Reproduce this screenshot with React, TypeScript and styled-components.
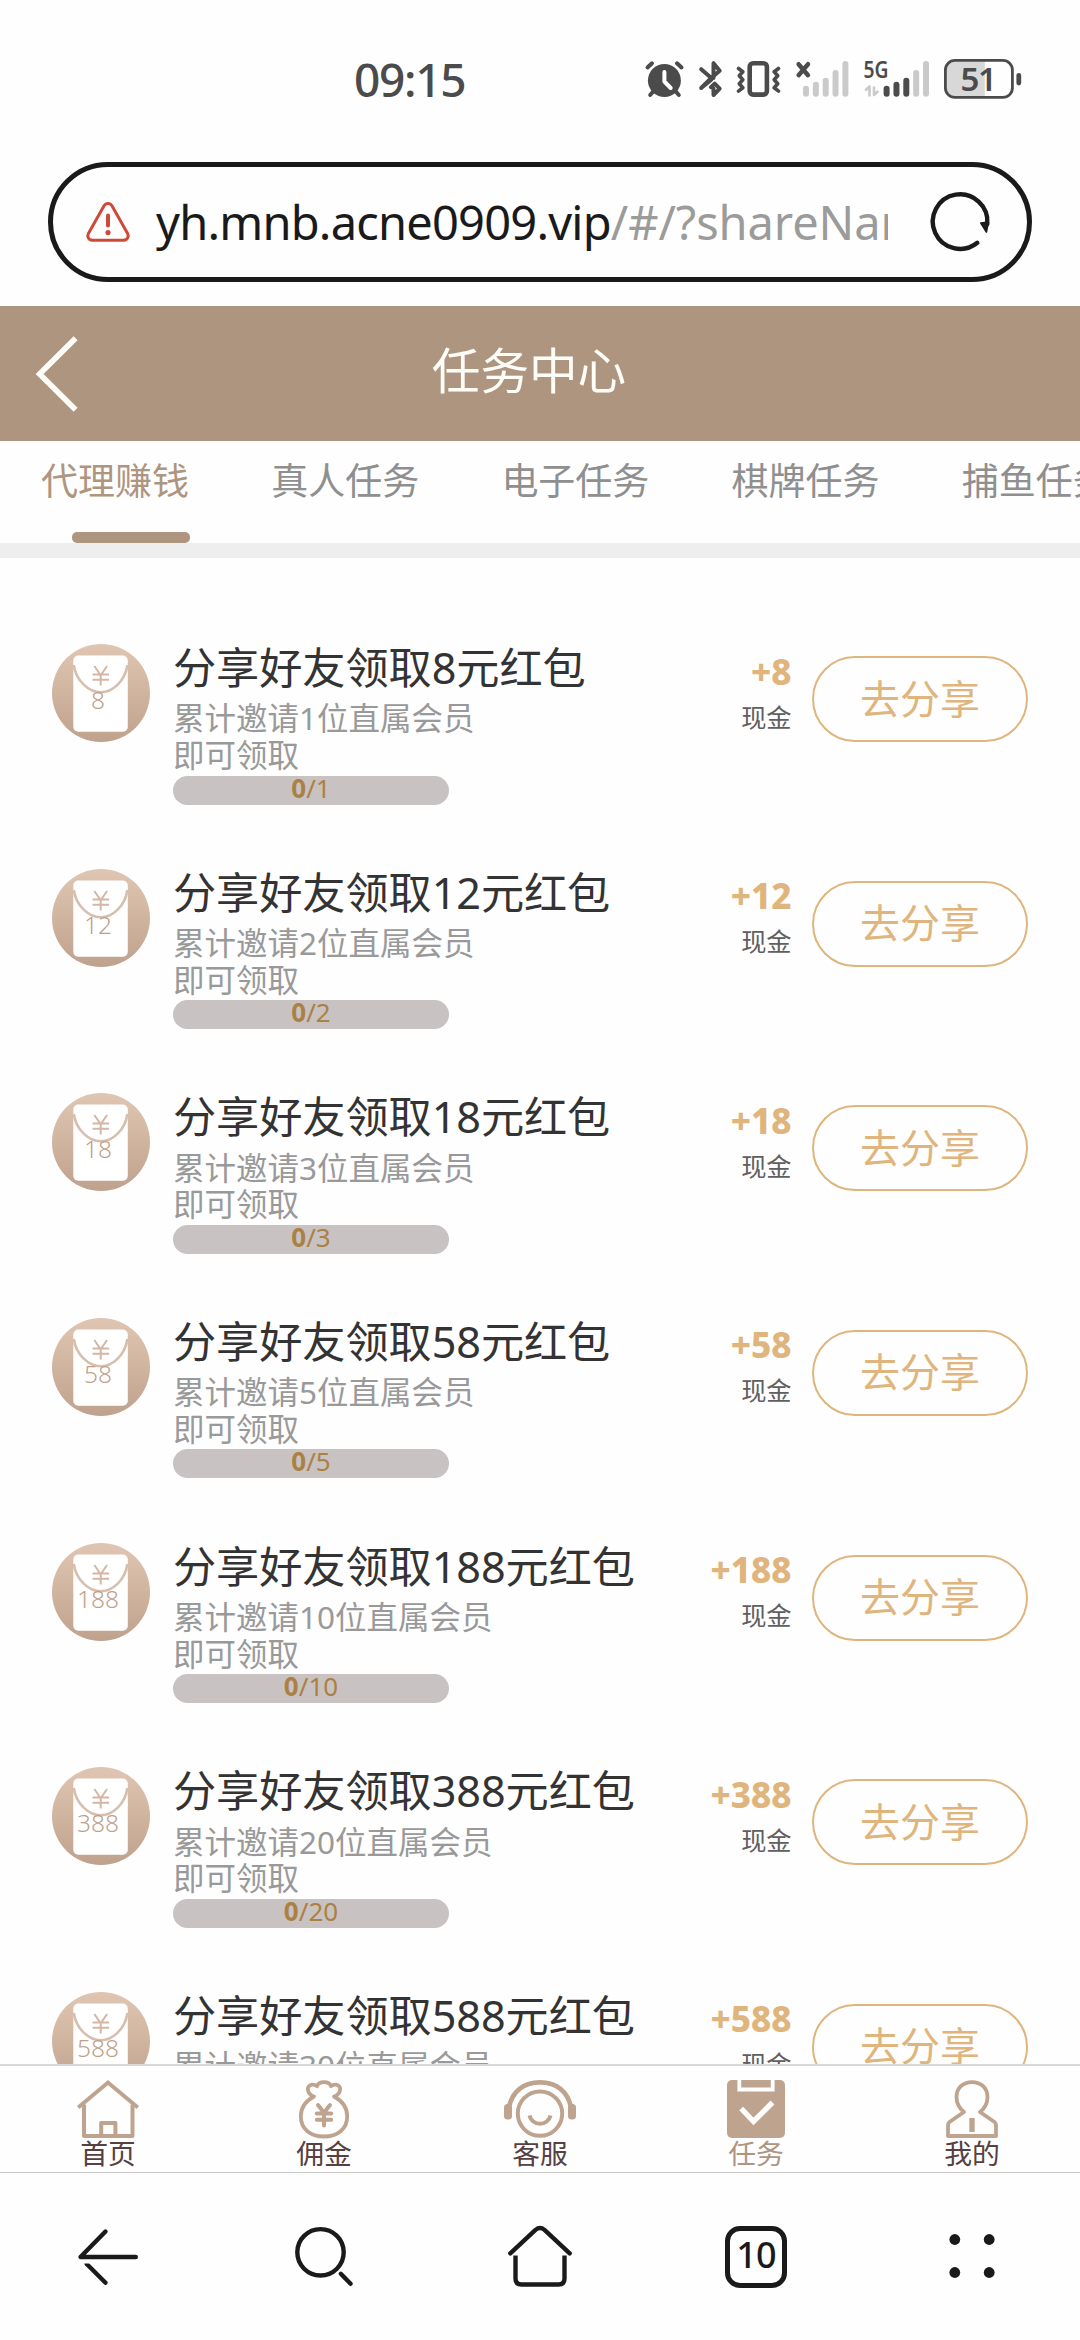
import React from "react";
import styled, { createGlobalStyle } from "styled-components";

const BRAND = "#ae9580";
const ICON = "#bea48f";
const GOLD = "#dfb57d";
const INK = "#1a1a1a";
const STATUS = "#4b4b4b";
const FONT = '"Noto Sans", "Noto Sans CJK SC", sans-serif';

const GlobalStyle = createGlobalStyle`
  * { box-sizing: border-box; }
  body { margin: 0; background: #fff; font-family: ${FONT}; }
  svg { display: block; flex: none; overflow: visible; }
  button { font-family: inherit; cursor: pointer; }
`;

const Screen = styled.div`
  width: 1080px;
  height: 2340px;
  display: flex;
  flex-direction: column;
  overflow: hidden;
  background: #fefefe;
`;

/* ---------- system status bar ---------- */

const StatusBar = styled.div`
  height: 162px;
  flex: none;
  display: flex;
  justify-content: space-between;
  padding: 59px 58px 0 354px;
`;

const Clock = styled.div`
  color: ${STATUS};
  font-size: 46px;
  font-weight: 500;
  line-height: 40px;
  letter-spacing: -1.3px;
`;

const StatusIcons = styled.div`
  display: flex;
  align-items: center;
  height: 40px;
  gap: 14.7px;
`;

/* ---------- browser address bar ---------- */

const AddressBar = styled.div`
  height: 120px;
  flex: none;
  margin: 0 48px 24px;
  padding: 0 36px 0 33px;
  display: flex;
  align-items: center;
  border: 5px solid ${INK};
  border-radius: 60px;
`;

const Url = styled.div`
  width: 732px;
  margin-left: 26px;
  margin-right: 43px;
  overflow: hidden;
  white-space: nowrap;
  font-size: 47px;
  line-height: 70px;
  letter-spacing: -0.1px;
  color: #9b9b9b;
`;

const Host = styled.span`
  color: ${INK};
  letter-spacing: -0.78px;
`;

/* ---------- page header and tabs ---------- */

const PageHeader = styled.header`
  height: 135px;
  flex: none;
  display: flex;
  align-items: center;
  padding: 0 100px 0 36px;
  background: ${BRAND};
`;

const PageTitle = styled.h1`
  flex: 1;
  margin: 0;
  text-align: center;
  font-size: 48.6px;
  font-weight: 400;
  line-height: 60px;
  padding-bottom: 7px;
  color: #fffdf8;
`;

const Tabs = styled.nav`
  height: 102px;
  flex: none;
  display: flex;
  gap: 82.2px;
  padding-left: 41px;
  overflow: hidden;
`;

const Tab = styled.div<{ $active?: boolean }>`
  flex: none;
  width: 148px;
  padding-top: 20px;
  display: flex;
  flex-direction: column;
  justify-content: space-between;
  white-space: nowrap;
  font-size: 37px;
  line-height: 40px;
  color: ${(p) => (p.$active ? BRAND : "#8f8f8f")};
`;

const TabUnderline = styled.div`
  width: 118px;
  height: 11px;
  margin-left: 31px;
  border-radius: 5px;
  background: ${BRAND};
`;

const Divider = styled.div`
  height: 15px;
  flex: none;
  background: #eee;
`;

/* ---------- task list ---------- */

const TaskList = styled.main`
  flex: 1;
  min-height: 0;
  overflow: hidden;
  padding: 86px 52px 0;
`;

const TaskRow = styled.article`
  height: 224.64px;
  display: grid;
  grid-template-columns: 98px 1fr auto 216px;
  align-items: start;
`;

const TaskBody = styled.div`
  padding-left: 23px;
  white-space: nowrap;
`;

const TaskTitle = styled.h2`
  margin: 0 0 9.4px;
  font-size: 43.2px;
  line-height: 47px;
  font-weight: 400;
  letter-spacing: -0.08px;
  color: #333;
`;

const TaskDesc = styled.p`
  margin: 0 0 1.8px;
  font-size: 31.5px;
  line-height: 36.7px;
  color: #999;
`;

const Progress = styled.div`
  width: 276px;
  height: 29px;
  border-radius: 14.5px;
  background: #c9c2c2;
  text-align: center;
  font-size: 26px;
  line-height: 25px;
  color: #ab8143;
`;

const Reward = styled.div`
  padding-top: 9.5px;
  margin-right: 20.5px;
  text-align: right;
`;

const Amount = styled.div`
  font-size: 35px;
  line-height: 36px;
  font-weight: 800;
  color: ${GOLD};
`;

const Unit = styled.div`
  margin-top: 12px;
  font-size: 25.2px;
  line-height: 30px;
  color: #5f5f5f;
`;

const ShareButton = styled.button`
  width: 216px;
  height: 86px;
  margin-top: 12px;
  padding: 0 0 1px;
  border: 2px solid ${GOLD};
  border-radius: 43px;
  background: transparent;
  color: ${GOLD};
  font-size: 40px;
  line-height: 50px;
`;

/* ---------- bottom bars ---------- */

const TabBar = styled.nav`
  height: 109px;
  flex: none;
  display: grid;
  grid-template-columns: repeat(5, 1fr);
  border-top: 2px solid #d8d8d8;
  border-bottom: 1px solid #c8c8c8;
`;

const TabBarItem = styled.div<{ $active?: boolean }>`
  display: flex;
  flex-direction: column;
  align-items: center;
  padding-top: 14px;
  font-size: 27.8px;
  line-height: 27px;
  color: ${(p) => (p.$active ? BRAND : "#564040")};
`;

const BrowserBar = styled.nav`
  height: 167px;
  flex: none;
  display: grid;
  grid-template-columns: repeat(5, 1fr);
  align-items: center;
  justify-items: center;
`;

const TabCount = styled.div`
  width: 62px;
  height: 62px;
  border: 5px solid ${INK};
  border-radius: 15px;
  text-align: center;
  font-size: 36px;
  line-height: 48px;
  letter-spacing: -0.8px;
  font-weight: 500;
  color: ${INK};
`;

/* ---------- icons ---------- */

const AlarmIcon = () => (
  <svg width="39" height="36" viewBox="0 0 39 36" fill="none" stroke={STATUS} strokeWidth="4" strokeLinecap="round">
    <circle cx="19.4" cy="19.5" r="16.5" fill={STATUS} stroke="none" />
    <path d="M2.5 6.5 7 2.3M36.5 6.5 32 2.3M9 29.5 5.2 34M30 29.5 33.8 34" />
    <path d="M19.4 11v9.5l6.3 6.5" stroke="#fff" strokeLinejoin="round" />
  </svg>
);

const BluetoothIcon = () => (
  <svg width="23" height="36" viewBox="0 0 23 36" fill="none" stroke={STATUS} strokeWidth="4" strokeLinecap="round" strokeLinejoin="round">
    <path d="M2.2 8.2 12.3 17 20.7 9.8 14.5 2.2V17M2.2 27 12.3 17M12.3 18.7 2.2 27M14.5 27.5V34l6.2-6.4-5-5-3.8 3.6" />
  </svg>
);

const VibrateIcon = () => (
  <svg width="45" height="36" viewBox="0 0 45 36" fill="none" stroke={STATUS} strokeLinecap="round" strokeLinejoin="round">
    <rect x="13.7" y="2.2" width="17.2" height="31.4" rx="3.5" strokeWidth="4.6" />
    <path d="m2.5 7.5 4.3 3.3-3.5 4 3.5 4-3.5 4 3.5 4-4.3 3.3M42.5 7.5l-4.3 3.3 3.5 4-3.5 4 3.5 4-3.5 4 4.3 3.3" strokeWidth="3.6" />
  </svg>
);

const BAR_TOPS = [24.7, 20.7, 16.7, 9, 0];

const SignalBars = ({ x, lit }: { x: number; lit: number }) => (
  <>
    {BAR_TOPS.map((top, i) => (
      <rect key={top} x={x + i * 9.85} y={top} width="6" height={35.8 - top} rx="3" fill={i < lit ? STATUS : "#cacaca"} />
    ))}
  </>
);

const NoSignalIcon = () => (
  <svg width="53" height="36" viewBox="0 0 53 36">
    <path d="m2.6 3.2 9.4 11M12 3.2l-9.4 11" stroke={STATUS} strokeWidth="4.4" strokeLinecap="round" />
    <SignalBars x={7} lit={0} />
  </svg>
);

const MobileIcon = () => (
  <svg width="65.5" height="36" viewBox="0 0 65.5 36">
    <text x="-0.5" y="17.2" fontFamily={FONT} fontSize="23.5" fontWeight="600" fill={STATUS} textLength="25" lengthAdjust="spacingAndGlyphs">5G</text>
    <path d="M1.2 29.5 5.5 25.5V35.5M10 25.5V34l4.3-4" stroke="#cacaca" strokeWidth="2.6" fill="none" strokeLinejoin="round" />
    <SignalBars x={19.6} lit={3} />
  </svg>
);

const BatteryIcon = () => (
  <svg width="78" height="40" viewBox="0 0 78 40">
    <path d="M11 1.5H40.8V38.5H11A9.5 9.5 0 0 1 1.5 29V11A9.5 9.5 0 0 1 11 1.5Z" fill="#d8d8d8" />
    <rect x="1.4" y="1.4" width="67" height="37" rx="9.5" fill="none" stroke={STATUS} strokeWidth="2.8" />
    <rect x="72.4" y="14" width="4.8" height="12.4" rx="2.4" fill={STATUS} />
    <text x="34" y="32" textAnchor="middle" fontFamily={FONT} fontSize="33" fontWeight="600" letterSpacing="-1.4" fill={STATUS}>51</text>
  </svg>
);

const WarningIcon = () => (
  <svg width="44" height="40" viewBox="0 0 44 40" fill="none" stroke="#cd4a38" strokeWidth="3">
    <path d="M18.2 3.6a4.4 4.4 0 0 1 7.6 0L41.6 31.6a4.4 4.4 0 0 1-3.8 6.6H6.2a4.4 4.4 0 0 1-3.8-6.6Z" strokeLinejoin="round" />
    <path d="M22 13.5v10" strokeWidth="4" strokeLinecap="round" />
    <circle cx="22" cy="30.6" r="2.6" fill="#cd4a38" stroke="none" />
  </svg>
);

const ReloadIcon = () => (
  <svg width="58" height="60" viewBox="0 0 58 60" fill="none" stroke={INK} strokeLinecap="round">
    <path d="M46.3 50.8A27.3 27.3 0 1 1 56.3 32" strokeWidth="4.4" />
    <path d="M49.8 31 57.4 30 55.4 40Z" fill={INK} strokeWidth="1.6" strokeLinejoin="round" />
  </svg>
);

const ChevronIcon = () => (
  <svg width="42" height="76" viewBox="0 0 42 76" fill="none" stroke="#fffdf8" strokeWidth="5.6">
    <path d="M39.6 2.2 3.6 38l36 35.8" />
  </svg>
);

const EnvelopeIcon = ({ value }: { value: number }) => (
  <svg width="98" height="98" viewBox="0 0 98 98">
    <defs>
      <linearGradient id="coin" x1="0" y1="0" x2="0" y2="1">
        <stop offset="0" stopColor="#e0c6b2" />
        <stop offset="1" stopColor="#bfa28e" />
      </linearGradient>
    </defs>
    <circle cx="49" cy="49" r="49" fill="url(#coin)" />
    <rect x="21.3" y="11.5" width="54.5" height="76.2" rx="5" fill="#fff" />
    <path d="M21.8 21C24 37 37 48.3 48.8 48.3S73.2 37 75.4 21" fill="none" stroke="#d6bfae" strokeWidth="2.6" />
    <path d="M42.300 22 48.700 31.300 55.100 22M40.500 30.500h16.600M40.500 35.700h16.600M48.700 31v10.500" fill="none" stroke="#d3b7a4" strokeWidth="2" />
    <text x="46" y="65" textAnchor="middle" fontFamily={FONT} fontSize="24.5" fontWeight="300" fill="#bf9f8a">{value}</text>
  </svg>
);

const HomeIcon = () => (
  <svg width="62" height="60" viewBox="0 0 62 60" fill="none" stroke={ICON} strokeWidth="4">
    <path d="M1.2 27.5 31 2.5l29.8 25" />
    <path d="M7 24.5V56h48.5V24.5M24.2 56V43h14.2v13" strokeLinejoin="round" />
  </svg>
);

const CommissionIcon = () => (
  <svg width="54" height="60" viewBox="0 0 54 60" fill="none" stroke={ICON} strokeWidth="3.8" strokeLinejoin="round" strokeLinecap="round">
    <path d="M17 16.500C10 14 8.500 5.500 15 4.600c2.300-.3 4 .7 5 1.600C22 .8 32 .8 34 6.200c1-.9 2.700-1.900 5-1.600 6.500.9 5 9.400-2 11.900 8.500 4.500 13.200 12 13.200 20C50.200 49 40.500 56.500 27 56.500S3.800 49 3.800 36.500c0-8 4.700-15.500 13.200-20Z" />
    <path d="M21 25l6 7.800L33 25M19.800 33.500h14.400M19.800 39.800h14.400M27 33v12.500" strokeWidth="4" />
  </svg>
);

const ServiceIcon = () => (
  <svg width="72" height="60" viewBox="0 0 72 60" fill="none" stroke={ICON}>
    <path d="M4.8 28C8 11 20 2.400 36 2.400S64 11 67.200 28" strokeWidth="4.6" />
    <rect x="0" y="24" width="8" height="15.5" rx="3.5" fill={ICON} stroke="none" />
    <rect x="64" y="24" width="8" height="15.5" rx="3.5" fill={ICON} stroke="none" />
    <circle cx="36" cy="33.600" r="22.200" strokeWidth="4" />
    <path d="M25.500 35.500a10.800 10.800 0 0 0 21 0" strokeWidth="4" />
  </svg>
);

const TaskIcon = () => (
  <svg width="58" height="60" viewBox="0 0 58 60">
    <rect width="58" height="58" rx="5" fill={ICON} />
    <path d="M12.3 0v9.500h33.400V0" fill="none" stroke="#fff" strokeWidth="3.8" />
    <path d="M14.200 28.500 26.500 41.500 45.500 22.500" fill="none" stroke="#fff" strokeWidth="5.4" />
  </svg>
);

const ProfileIcon = () => (
  <svg width="54" height="60" viewBox="0 0 54 60" fill="none" stroke={ICON} strokeWidth="3.8" strokeLinejoin="round">
    <path d="M19 32c-4.500-3.500-7.500-8.500-7.500-15C11.500 8 18 2.200 27 2.200S42.500 8 42.500 17c0 6.500-3 11.500-7.500 15l14.500 10c1 .7 1.500 1.700 1.500 3V56H3V45c0-1.300.5-2.300 1.500-3Z" />
    <path d="M27 38v14" strokeWidth="5.4" />
  </svg>
);

const BackIcon = () => (
  <svg width="60" height="56" viewBox="0 0 60 56" fill="none" stroke={INK} strokeWidth="4.4" strokeLinecap="round" strokeLinejoin="round">
    <path d="M27.500 2.500 2.500 28H57.800" />
    <path d="m8.500 34.800 19 19" />
    <path d="M4 33.200h9" stroke="#fff" strokeWidth="2.6" />
  </svg>
);

const SearchIcon = () => (
  <svg width="58" height="60" viewBox="0 0 58 60" fill="none" stroke={INK} strokeWidth="4.4" strokeLinecap="round">
    <circle cx="25.500" cy="25.300" r="23.200" />
    <path d="m45.800 46.800 9.800 10" />
  </svg>
);

const BrowserHomeIcon = () => (
  <svg width="64" height="62" viewBox="0 0 64 62" fill="none" stroke={INK} strokeWidth="4.4" strokeLinecap="round" strokeLinejoin="round">
    <path d="M2.300 27.300 27.500 3.900q4.500-3.600 9 0L61.700 27.300" />
    <path d="M7.500 29.500V52.500q0 6 6 6h37q6 0 6-6V29.500" strokeLinecap="butt" />
  </svg>
);

const MenuIcon = () => (
  <svg width="46" height="46" viewBox="0 0 46 46" fill={INK}>
    <circle cx="5.8" cy="5.5" r="5.4" />
    <circle cx="40.2" cy="5.5" r="5.4" />
    <circle cx="5.8" cy="38.500" r="5.4" />
    <circle cx="40.2" cy="38.500" r="5.4" />
  </svg>
);

/* ---------- data ---------- */

const TABS = ["代理赚钱", "真人任务", "电子任务", "棋牌任务", "捕鱼任务"];

const TASKS = [
  { reward: 8, invites: 1 },
  { reward: 12, invites: 2 },
  { reward: 18, invites: 3 },
  { reward: 58, invites: 5 },
  { reward: 188, invites: 10 },
  { reward: 388, invites: 20 },
  { reward: 588, invites: 30 },
];

const NAV = [
  { label: "首页", Icon: HomeIcon },
  { label: "佣金", Icon: CommissionIcon },
  { label: "客服", Icon: ServiceIcon },
  { label: "任务", Icon: TaskIcon, active: true },
  { label: "我的", Icon: ProfileIcon },
];

export default function App() {
  return (
    <>
      <GlobalStyle />
      <Screen>
        <StatusBar>
          <Clock>09:15</Clock>
          <StatusIcons>
            <AlarmIcon />
            <BluetoothIcon />
            <VibrateIcon />
            <NoSignalIcon />
            <MobileIcon />
            <BatteryIcon />
          </StatusIcons>
        </StatusBar>

        <AddressBar>
          <WarningIcon />
          <Url>
            <Host>yh.mnb.acne0909.vip</Host>/#/?shareName
          </Url>
          <ReloadIcon />
        </AddressBar>

        <PageHeader>
          <ChevronIcon />
          <PageTitle>任务中心</PageTitle>
        </PageHeader>

        <Tabs>
          {TABS.map((label, i) => (
            <Tab key={label} $active={i === 0}>
              {label}
              {i === 0 && <TabUnderline />}
            </Tab>
          ))}
        </Tabs>
        <Divider />

        <TaskList>
          {TASKS.map(({ reward, invites }) => (
            <TaskRow key={reward}>
              <EnvelopeIcon value={reward} />
              <TaskBody>
                <TaskTitle>分享好友领取{reward}元红包</TaskTitle>
                <TaskDesc>
                  累计邀请{invites}位直属会员
                  <br />
                  即可领取
                </TaskDesc>
                <Progress>
                  <b>0</b>/{invites}
                </Progress>
              </TaskBody>
              <Reward>
                <Amount>+{reward}</Amount>
                <Unit>现金</Unit>
              </Reward>
              <ShareButton>去分享</ShareButton>
            </TaskRow>
          ))}
        </TaskList>

        <TabBar>
          {NAV.map(({ label, Icon, active }) => (
            <TabBarItem key={label} $active={active}>
              <Icon />
              {label}
            </TabBarItem>
          ))}
        </TabBar>

        <BrowserBar>
          <BackIcon />
          <SearchIcon />
          <BrowserHomeIcon />
          <TabCount>10</TabCount>
          <MenuIcon />
        </BrowserBar>
      </Screen>
    </>
  );
}
